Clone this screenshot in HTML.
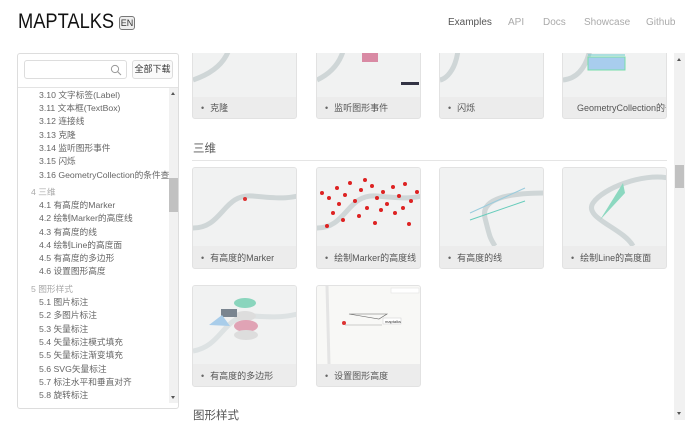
<!DOCTYPE html>
<html><head><meta charset="utf-8"><style>
*{margin:0;padding:0;box-sizing:border-box}
body{width:696px;height:424px;overflow:hidden;background:#fff;font-family:"Liberation Sans","Noto Sans CJK SC",sans-serif;color:#555;position:relative}
.logo{position:absolute;left:18px;top:10px;font-size:21px;color:#111;transform:scaleX(0.87);transform-origin:0 0;white-space:nowrap}
.en{position:absolute;left:119px;top:16px;width:16px;height:14px;border:1px solid #777;border-radius:3px;background:#eee;font-size:9px;color:#333;text-align:center;line-height:12px}
.nav{position:absolute;top:17px;font-size:10px;color:#aaa}
.side{position:absolute;left:17px;top:53px;width:162px;height:356px;border:1px solid #ddd;border-radius:3px;background:#fff;overflow:hidden}
.inp{position:absolute;left:6px;top:6px;width:103px;height:19px;border:1px solid #ddd;border-radius:3px}
.btn{position:absolute;left:114px;top:6px;width:41px;height:19px;border:1px solid #ddd;border-radius:3px;font-size:9px;color:#333;text-align:center;line-height:17px;background:#fafafa}
.sep{position:absolute;left:0;top:33px;width:162px;border-top:1px solid #e3e3e3}
.it{position:absolute;left:21px;font-size:8.7px;color:#666;white-space:nowrap}
.gr{position:absolute;left:13px;font-size:8.7px;color:#aaa;white-space:nowrap}
.sb{position:absolute;left:151px;top:34px;width:9px;height:315px;background:#f1f1f1}
.clip{position:absolute;left:180px;top:53px;width:494px;height:371px;overflow:hidden}
.card{position:absolute;width:105px;height:102px;background:#ececec;border:1px solid #e2e2e2;border-radius:3px;overflow:hidden}
.card svg{position:absolute;left:0;top:0}
.lab{position:absolute;left:0;top:83px;width:105px;font-size:9px;color:#555;white-space:nowrap;padding-left:8px}
.lab:before{content:"•";margin-right:6px;color:#666}
.lab.nb:before{content:none}
.h{position:absolute;font-size:11.5px;color:#555}
</style></head><body>
<div class="logo">MAPTALKS</div><div class="en">EN</div>
<div class="nav" style="left:448px;color:#555">Examples</div>
<div class="nav" style="left:508px">API</div>
<div class="nav" style="left:543px">Docs</div>
<div class="nav" style="left:584px">Showcase</div>
<div class="nav" style="left:646px">Github</div>

<div class="side">
<div class="inp"><svg width="12" height="12" style="position:absolute;right:4px;top:3px" viewBox="0 0 12 12"><circle cx="5" cy="5" r="3.6" fill="none" stroke="#999" stroke-width="1"/><path d="M7.6 7.6L11 11" stroke="#999" stroke-width="1"/></svg></div>
<div class="btn">全部下载</div>
<div class="sep"></div>
<div class="it" style="top:34px">3.10 文字标签(Label)</div>
<div class="it" style="top:47px">3.11 文本框(TextBox)</div>
<div class="it" style="top:60px">3.12 连接线</div>
<div class="it" style="top:74px">3.13 克隆</div>
<div class="it" style="top:87px">3.14 监听图形事件</div>
<div class="it" style="top:100px">3.15 闪烁</div>
<div class="it" style="top:114px">3.16 GeometryCollection的条件查询</div>
<div class="gr" style="top:131px">4 三维</div>
<div class="it" style="top:144px">4.1 有高度的Marker</div>
<div class="it" style="top:157px">4.2 绘制Marker的高度线</div>
<div class="it" style="top:171px">4.3 有高度的线</div>
<div class="it" style="top:184px">4.4 绘制Line的高度面</div>
<div class="it" style="top:197px">4.5 有高度的多边形</div>
<div class="it" style="top:210px">4.6 设置图形高度</div>
<div class="gr" style="top:228px">5 图形样式</div>
<div class="it" style="top:241px">5.1 图片标注</div>
<div class="it" style="top:254px">5.2 多图片标注</div>
<div class="it" style="top:268px">5.3 矢量标注</div>
<div class="it" style="top:281px">5.4 矢量标注模式填充</div>
<div class="it" style="top:294px">5.5 矢量标注渐变填充</div>
<div class="it" style="top:308px">5.6 SVG矢量标注</div>
<div class="it" style="top:321px">5.7 标注水平和垂直对齐</div>
<div class="it" style="top:334px">5.8 旋转标注</div>
<div class="sb"><div style="position:absolute;left:0;top:90px;width:9px;height:34px;background:#c1c1c1"></div>
<div style="position:absolute;left:2px;top:4px;border:2.5px solid transparent;border-bottom:3px solid #555;border-top:0"></div>
<div style="position:absolute;left:2px;top:308px;border:2.5px solid transparent;border-top:3px solid #555;border-bottom:0"></div></div>
</div>

<div class="clip">
<div class="card" style="left:12px;top:-36px"><svg width="105" height="79"><rect width="105" height="79" fill="#f1f2f2"/><path d="M40 0C40 30 35 50 0 62" fill="none" stroke="#cfd6d7" stroke-width="5"/></svg><div class="lab">克隆</div></div>
<div class="card" style="left:136px;top:-36px"><svg width="105" height="79"><rect width="105" height="79" fill="#f1f2f2"/><path d="M30 0C30 30 25 50 0 62" fill="none" stroke="#cfd6d7" stroke-width="5"/><rect x="45" y="28" width="16" height="16" fill="#d98aa4"/><rect x="84" y="64" width="18" height="3" fill="#334"/></svg><div class="lab">监听图形事件</div></div>
<div class="card" style="left:259px;top:-36px"><svg width="105" height="79"><rect width="105" height="79" fill="#f1f2f2"/><path d="M15 0C25 40 10 60 0 62" fill="none" stroke="#cfd6d7" stroke-width="5"/></svg><div class="lab">闪烁</div></div>
<div class="card" style="left:382px;top:-36px"><svg width="105" height="79"><rect width="105" height="79" fill="#f1f2f2"/><path d="M30 0C30 40 20 60 0 62" fill="none" stroke="#cfd6d7" stroke-width="5"/><rect x="25" y="39" width="37" height="13" fill="#a8cdee" stroke="#7da"/><line x1="25" y1="37" x2="62" y2="37" stroke="#6cc"/></svg><div class="lab nb" style="padding-left:14px">GeometryCollection的条件查询</div></div>
<div class="h" style="left:13px;top:87px">三维</div>
<div style="position:absolute;left:12px;top:107px;width:475px;border-top:1px solid #e5e5e5"></div>
<div class="card" style="left:12px;top:114px"><svg width="105" height="78"><rect width="105" height="78" fill="#f1f2f2"/><path d="M0 60C30 60 30 25 60 28S95 30 105 28" fill="none" stroke="#cfd6d7" stroke-width="5"/><circle cx="52" cy="31" r="2" fill="#d33"/></svg><div class="lab">有高度的Marker</div></div>
<div class="card" style="left:136px;top:114px"><svg width="105" height="78"><rect width="105" height="78" fill="#f1f2f2"/><path d="M0 60C30 60 30 25 60 28S95 30 105 28" fill="none" stroke="#cfd6d7" stroke-width="5"/>
<g fill="#d22"><circle cx="5" cy="25" r="2"/><circle cx="12" cy="30" r="2"/><circle cx="20" cy="20" r="2"/><circle cx="28" cy="27" r="2"/><circle cx="33" cy="15" r="2"/><circle cx="38" cy="33" r="2"/><circle cx="44" cy="22" r="2"/><circle cx="50" cy="40" r="2"/><circle cx="55" cy="18" r="2"/><circle cx="60" cy="30" r="2"/><circle cx="66" cy="24" r="2"/><circle cx="70" cy="36" r="2"/><circle cx="76" cy="19" r="2"/><circle cx="82" cy="28" r="2"/><circle cx="88" cy="16" r="2"/><circle cx="94" cy="33" r="2"/><circle cx="100" cy="24" r="2"/><circle cx="16" cy="45" r="2"/><circle cx="26" cy="52" r="2"/><circle cx="42" cy="48" r="2"/><circle cx="58" cy="55" r="2"/><circle cx="78" cy="45" r="2"/><circle cx="92" cy="56" r="2"/><circle cx="48" cy="12" r="2"/><circle cx="22" cy="36" r="2"/><circle cx="64" cy="42" r="2"/><circle cx="86" cy="40" r="2"/><circle cx="10" cy="58" r="2"/></g></svg><div class="lab">绘制Marker的高度线</div></div>
<div class="card" style="left:259px;top:114px"><svg width="105" height="78"><rect width="105" height="78" fill="#f1f2f2"/><path d="M105 25C70 25 40 30 45 50S50 70 55 78" fill="none" stroke="#cfd6d7" stroke-width="5"/><line x1="30" y1="45" x2="85" y2="20" stroke="#9cd"/><line x1="30" y1="52" x2="85" y2="33" stroke="#6cb"/></svg><div class="lab">有高度的线</div></div>
<div class="card" style="left:382px;top:114px"><svg width="105" height="78"><rect width="105" height="78" fill="#f1f2f2"/><path d="M105 10C80 5 40 20 30 35S60 60 70 78" fill="none" stroke="#cfd6d7" stroke-width="5"/><path d="M60 15L37 52L62 25Z" fill="#8cd8c0"/></svg><div class="lab">绘制Line的高度面</div></div>
<div class="card" style="left:12px;top:232px"><svg width="105" height="78"><rect width="105" height="78" fill="#f1f2f2"/><path d="M0 65C30 60 30 28 60 30S95 30 105 28" fill="none" stroke="#dde2e3" stroke-width="5"/><ellipse cx="52" cy="17" rx="11" ry="5" fill="#8ad5bd"/><ellipse cx="52" cy="30" rx="11" ry="5" fill="#ddd"/><rect x="28" y="23" width="16" height="8" fill="#7a8590"/><path d="M16 39L37 40L29 29Z" fill="#a9cdea"/><ellipse cx="53" cy="40" rx="12" ry="6" fill="#e0a3b5"/><ellipse cx="53" cy="49" rx="12" ry="5" fill="#ddd"/></svg><div class="lab">有高度的多边形</div></div>
<div class="card" style="left:136px;top:232px"><svg width="105" height="78"><rect width="105" height="78" fill="#f8f8f6"/><line x1="10" y1="0" x2="12" y2="78" stroke="#e4e4e4" stroke-width="3"/><rect x="74" y="2" width="28" height="5" fill="#fff" stroke="#ddd" stroke-width=".5"/><path d="M32 28L70 28L62 33Z" fill="none" stroke="#666" stroke-width=".6"/><rect x="66" y="32" width="18" height="6" fill="#fff" stroke="#ccc" stroke-width=".5"/><text x="68" y="37" font-size="4" fill="#333" font-family="Liberation Sans">maptalks</text><circle cx="27" cy="37" r="2" fill="#d33"/><line x1="28" y1="39" x2="65" y2="39" stroke="#888" stroke-width=".4"/></svg><div class="lab">设置图形高度</div></div>
<div class="h" style="left:13px;top:354px">图形样式</div>
</div>

<div style="position:absolute;left:674px;top:53px;width:11px;height:367px;background:#f1f1f1">
<div style="position:absolute;left:1px;top:112px;width:9px;height:23px;background:#c1c1c1"></div>
<div style="position:absolute;left:3px;top:5px;border:2.5px solid transparent;border-bottom:3px solid #555;border-top:0"></div>
<div style="position:absolute;left:3px;top:359px;border:2.5px solid transparent;border-top:3px solid #555;border-bottom:0"></div>
</div>
</body></html>
